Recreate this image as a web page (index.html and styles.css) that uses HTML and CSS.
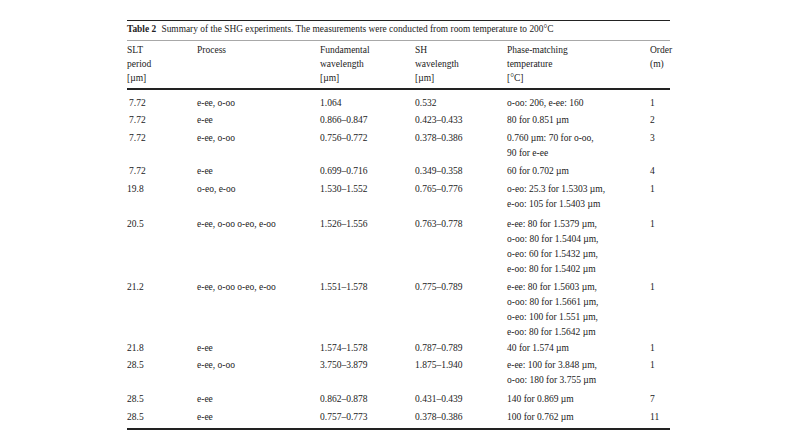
FILE: index.html
```html
<!DOCTYPE html>
<html>
<head>
<meta charset="utf-8">
<link rel="stylesheet" href="styles.css">
</head>
<body>
<div class="wrap">
  <div class="caption"><b class="tno">Table 2</b> Summary of the SHG experiments. The measurements were conducted from room temperature to 200°C</div>
  <table class="tbl">
    <colgroup>
      <col class="c1"><col class="c2"><col class="c3"><col class="c4"><col class="c5"><col class="c6">
    </colgroup>
    <thead>
      <tr>
        <th>SLT<br>period<br>[µm]</th>
        <th>Process</th>
        <th>Fundamental<br>wavelength<br>[µm]</th>
        <th>SH<br>wavelength<br>[µm]</th>
        <th>Phase-matching<br>temperature<br>[°C]</th>
        <th>Order<br>(m)</th>
      </tr>
    </thead>
    <tbody>
      <tr class="first">
        <td class="ind">7.72</td><td>e-ee, o-oo</td><td>1.064</td><td>0.532</td><td>o-oo: 206, e-ee: 160</td><td>1</td>
      </tr>
      <tr>
        <td class="ind">7.72</td><td>e-ee</td><td>0.866–0.847</td><td>0.423–0.433</td><td>80 for 0.851 µm</td><td>2</td>
      </tr>
      <tr class="two">
        <td class="ind">7.72</td><td>e-ee, o-oo</td><td>0.756–0.772</td><td>0.378–0.386</td><td>0.760 µm: 70 for o-oo,<br>90 for e-ee</td><td>3</td>
      </tr>
      <tr>
        <td class="ind">7.72</td><td>e-ee</td><td>0.699–0.716</td><td>0.349–0.358</td><td>60 for 0.702 µm</td><td>4</td>
      </tr>
      <tr class="two wide">
        <td>19.8</td><td>o-eo, e-oo</td><td>1.530–1.552</td><td>0.765–0.776</td><td>o-eo: 25.3 for 1.5303 µm,<br>e-oo: 105 for 1.5403 µm</td><td>1</td>
      </tr>
      <tr>
        <td>20.5</td><td>e-ee, o-oo o-eo, e-oo</td><td>1.526–1.556</td><td>0.763–0.778</td><td>e-ee: 80 for 1.5379 µm,<br>o-oo: 80 for 1.5404 µm,<br>o-eo: 60 for 1.5432 µm,<br>e-oo: 80 for 1.5402 µm</td><td>1</td>
      </tr>
      <tr class="tight">
        <td>21.2</td><td>e-ee, o-oo o-eo, e-oo</td><td>1.551–1.578</td><td>0.775–0.789</td><td>e-ee: 80 for 1.5603 µm,<br>o-oo: 80 for 1.5661 µm,<br>o-eo: 100 for 1.551 µm,<br>e-oo: 80 for 1.5642 µm</td><td>1</td>
      </tr>
      <tr>
        <td>21.8</td><td>e-ee</td><td>1.574–1.578</td><td>0.787–0.789</td><td>40 for 1.574 µm</td><td>1</td>
      </tr>
      <tr class="two">
        <td>28.5</td><td>e-ee, o-oo</td><td>3.750–3.879</td><td>1.875–1.940</td><td>e-ee: 100 for 3.848 µm,<br>o-oo: 180 for 3.755 µm</td><td>1</td>
      </tr>
      <tr>
        <td>28.5</td><td>e-ee</td><td>0.862–0.878</td><td>0.431–0.439</td><td>140 for 0.869 µm</td><td>7</td>
      </tr>
      <tr class="last">
        <td>28.5</td><td>e-ee</td><td>0.757–0.773</td><td>0.378–0.386</td><td>100 for 0.762 µm</td><td>11</td>
      </tr>
    </tbody>
  </table>
</div>
</body>
</html>
```

FILE: styles.css
```css
html, body {
  margin: 0;
  padding: 0;
  background: #ffffff;
}

body {
  font-family: "Liberation Serif", "Times New Roman", serif;
  font-size: 9.5px;
  color: #222222;
}

.wrap {
  width: 543px;
  margin: 20px 0 0 127px;
}

.caption {
  border-top: 1px solid #222222;
  border-bottom: 1px solid #a8a8a8;
  padding: 2px 0 5px 0;
  line-height: 12px;
  font-size: 9.4px;
  white-space: nowrap;
}

.tno {
  font-weight: bold;
  margin-right: 3px;
}

.tbl {
  width: 543px;
  border-collapse: collapse;
  table-layout: fixed;
}

.c1 { width: 70px; }
.c2 { width: 123px; }
.c3 { width: 95px; }
.c4 { width: 92px; }
.c5 { width: 143px; }
.c6 { width: 20px; }

.tbl th {
  font-weight: normal;
  text-align: left;
  vertical-align: top;
  line-height: 14px;
  padding: 2px 0 3px 0;
  border-bottom: 2px solid #222222;
  white-space: nowrap;
}

.tbl td {
  text-align: left;
  vertical-align: top;
  line-height: 15px;
  padding: 1.25px 0;
  white-space: nowrap;
}

.tbl tr.first td {
  padding-top: 5.5px;
}

.tbl tr.two td {
  padding-bottom: 2.5px;
}

.tbl tr.wide td {
  padding-bottom: 4px;
}

.tbl tr.tight td {
  padding-bottom: 0;
}

.tbl tr.last td {
  padding-bottom: 3px;
  border-bottom: 2px solid #222222;
}

.tbl td.ind {
  padding-left: 2px;
}
```
